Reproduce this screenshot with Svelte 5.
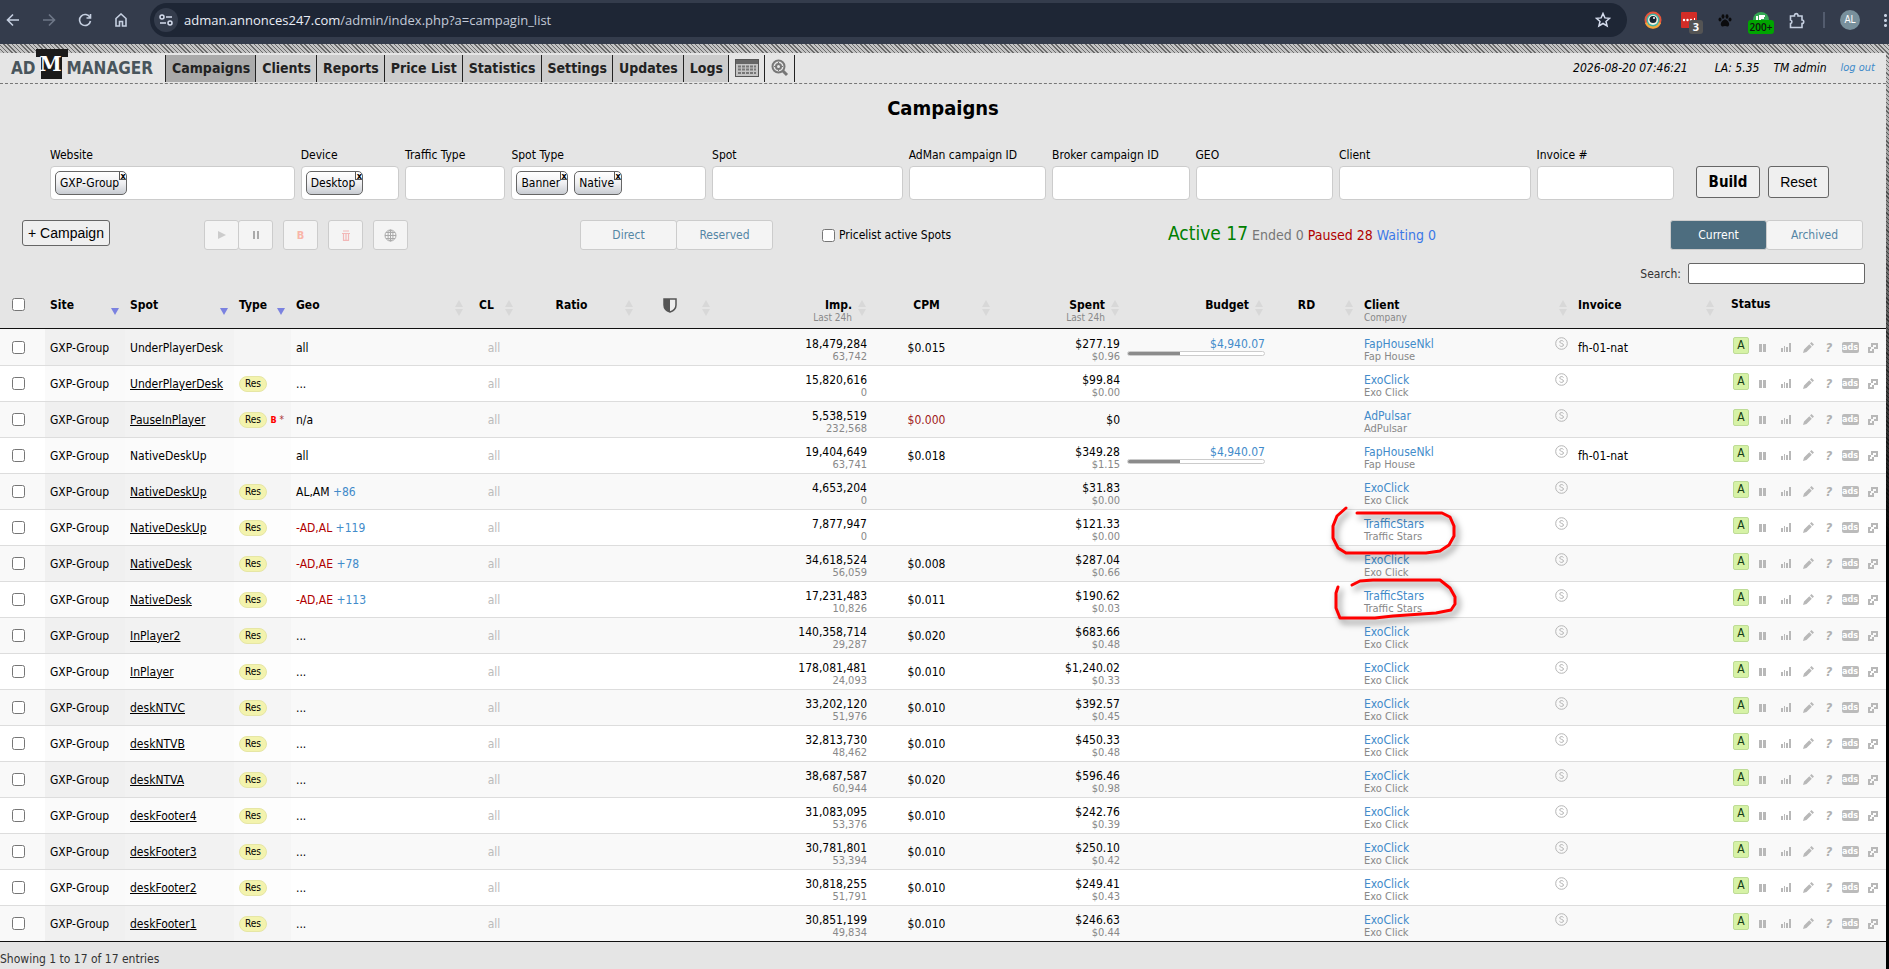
<script lang="ts">
  interface Campaign {
    spot: string;
    res?: boolean;
    blocked?: boolean;
    geo: string;
    geoMore?: string;
    excluded?: boolean;
    imp: string;
    impDay: string;
    cpm: string;
    spent: string;
    spentDay: string;
    budget?: string;
    client: string;
    company: string;
    invoice?: string;
    mark?: string;
  }

  const menu = ['Campaigns', 'Clients', 'Reports', 'Price List', 'Statistics', 'Settings', 'Updates', 'Logs'];

  const filters = [
    { id: 'website', label: 'Website', tags: ['GXP-Group'] },
    { id: 'device', label: 'Device', tags: ['Desktop'] },
    { id: 'traffic', label: 'Traffic Type', tags: [] },
    { id: 'spot-type', label: 'Spot Type', tags: ['Banner', 'Native'] },
    { id: 'spot', label: 'Spot', tags: [] },
    { id: 'adman', label: 'AdMan campaign ID', tags: [] },
    { id: 'broker', label: 'Broker campaign ID', tags: [] },
    { id: 'geo', label: 'GEO', tags: [] },
    { id: 'client', label: 'Client', tags: [] },
    { id: 'invoice', label: 'Invoice #', tags: [] }
  ];

  const columns = [
    { name: 'Site', cls: 'left', sort: 'asc' },
    { name: 'Spot', cls: 'left', sort: 'asc' },
    { name: 'Type', cls: 'left', sort: 'asc' },
    { name: 'Geo', cls: 'left', sort: 'both' },
    { name: 'CL', cls: 'center', sort: 'both' },
    { name: 'Ratio', cls: 'center', sort: 'both' },
    { name: 'shield', cls: 'center', sort: 'both' },
    { name: 'Imp.', sub: 'Last 24h', cls: 'right', sort: 'both' },
    { name: 'CPM', cls: 'center', sort: 'both' },
    { name: 'Spent', sub: 'Last 24h', cls: 'right', sort: 'both' },
    { name: 'Budget', cls: 'right', sort: 'both' },
    { name: 'RD', cls: 'center', sort: 'both' },
    { name: 'Client', sub: 'Company', cls: 'left', sort: 'both' },
    { name: 'Invoice', cls: 'left', sort: 'both' }
  ];

  const widths = [45, 80, 109, 57, 178, 50, 120, 77, 156, 124, 129, 144, 90, 214, 147, 166];

  const exo = { client: 'ExoClick', company: 'Exo Click' };
  const fap = { client: 'FapHouseNkl', company: 'Fap House', invoice: 'fh-01-nat', budget: '$4,940.07' };
  const stars = { client: 'TrafficStars', company: 'Traffic Stars' };

  const upperMark = 'M27 8 L18 16 L14 26 V38 L19 48 L27 53 H107 L121 51 L130 45 L135 36 V26 L131 17 L123 13 H38';
  const lowerMark = 'M19 15 L17 21 V36 L21 46 H56 L74 44 L117 41 L132 38 L136 32 V25 L131 16 L121 8 H54 L41 9 L33 13';

  const campaigns: Campaign[] = [
    { spot: 'UnderPlayerDesk', geo: 'all', imp: '18,479,284', impDay: '63,742', cpm: '$0.015', spent: '$277.19', spentDay: '$0.96', ...fap },
    { spot: 'UnderPlayerDesk', res: true, geo: '...', imp: '15,820,616', impDay: '0', cpm: '', spent: '$99.84', spentDay: '$0.00', ...exo },
    { spot: 'PauseInPlayer', res: true, blocked: true, geo: 'n/a', imp: '5,538,519', impDay: '232,568', cpm: '$0.000', spent: '$0', spentDay: '', client: 'AdPulsar', company: 'AdPulsar' },
    { spot: 'NativeDeskUp', geo: 'all', imp: '19,404,649', impDay: '63,741', cpm: '$0.018', spent: '$349.28', spentDay: '$1.15', ...fap },
    { spot: 'NativeDeskUp', res: true, geo: 'AL,AM', geoMore: '+86', imp: '4,653,204', impDay: '0', cpm: '', spent: '$31.83', spentDay: '$0.00', ...exo },
    { spot: 'NativeDeskUp', res: true, geo: '-AD,AL', geoMore: '+119', excluded: true, imp: '7,877,947', impDay: '0', cpm: '', spent: '$121.33', spentDay: '$0.00', mark: upperMark, ...stars },
    { spot: 'NativeDesk', res: true, geo: '-AD,AE', geoMore: '+78', excluded: true, imp: '34,618,524', impDay: '56,059', cpm: '$0.008', spent: '$287.04', spentDay: '$0.66', ...exo },
    { spot: 'NativeDesk', res: true, geo: '-AD,AE', geoMore: '+113', excluded: true, imp: '17,231,483', impDay: '10,826', cpm: '$0.011', spent: '$190.62', spentDay: '$0.03', mark: lowerMark, ...stars },
    { spot: 'InPlayer2', res: true, geo: '...', imp: '140,358,714', impDay: '29,287', cpm: '$0.020', spent: '$683.66', spentDay: '$0.48', ...exo },
    { spot: 'InPlayer', res: true, geo: '...', imp: '178,081,481', impDay: '24,093', cpm: '$0.010', spent: '$1,240.02', spentDay: '$0.33', ...exo },
    { spot: 'deskNTVC', res: true, geo: '...', imp: '33,202,120', impDay: '51,976', cpm: '$0.010', spent: '$392.57', spentDay: '$0.45', ...exo },
    { spot: 'deskNTVB', res: true, geo: '...', imp: '32,813,730', impDay: '48,462', cpm: '$0.010', spent: '$450.33', spentDay: '$0.48', ...exo },
    { spot: 'deskNTVA', res: true, geo: '...', imp: '38,687,587', impDay: '60,944', cpm: '$0.020', spent: '$596.46', spentDay: '$0.98', ...exo },
    { spot: 'deskFooter4', res: true, geo: '...', imp: '31,083,095', impDay: '53,376', cpm: '$0.010', spent: '$242.76', spentDay: '$0.39', ...exo },
    { spot: 'deskFooter3', res: true, geo: '...', imp: '30,781,801', impDay: '53,394', cpm: '$0.010', spent: '$250.10', spentDay: '$0.42', ...exo },
    { spot: 'deskFooter2', res: true, geo: '...', imp: '30,818,255', impDay: '51,791', cpm: '$0.010', spent: '$249.41', spentDay: '$0.43', ...exo },
    { spot: 'deskFooter1', res: true, geo: '...', imp: '30,851,199', impDay: '49,834', cpm: '$0.010', spent: '$246.63', spentDay: '$0.44', ...exo }
  ];

  let view = $state('current');
  let pricelistOnly = $state(false);
</script>

<div class="browser">
  <button class="nav-btn" aria-label="Back"><svg width="14" height="14" viewBox="0 0 14 14"><path d="M13 7H2M7 1.500L1.500 7L7 12.500" /></svg></button>
  <button class="nav-btn dim" aria-label="Forward"><svg width="14" height="14" viewBox="0 0 14 14"><path d="M1 7H12M7 1.500L12.500 7L7 12.500" /></svg></button>
  <button class="nav-btn" aria-label="Reload"><svg width="14" height="14" viewBox="0 0 14 14"><path d="M12 4.500A5.500 5.500 0 1 0 12.500 8M12.500 1V5H8.500" /></svg></button>
  <button class="nav-btn" aria-label="Home"><svg width="14" height="14" viewBox="0 0 14 14"><path d="M2 5.500L7 1L12 5.500V13H8.500V8.500H5.500V13H2Z" /></svg></button>
  <div class="omnibox">
    <button class="site-info" aria-label="Site information"><svg width="14" height="12" viewBox="0 0 14 12"><circle cx="3" cy="3" r="2" /><path d="M7 3H13M1 9H7" /><circle cx="11" cy="9" r="2" /></svg></button>
    <span class="url">adman.annonces247.com<span>/admin/index.php?a=campagin_list</span></span>
    <svg class="star" width="16" height="16" viewBox="0 0 16 16"><path d="M8 1.500L9.900 5.900L14.600 6.300L11 9.400L12.100 14L8 11.500L3.900 14L5 9.400L1.400 6.300L6.100 5.900Z" /></svg>
  </div>
  <div class="extensions">
    <span class="ext"><svg width="18" height="18" viewBox="0 0 18 18"><circle cx="9" cy="9" r="8.500" fill="#e8553b" /><path d="M1 12A8.500 8.500 0 0 0 17 12L9 9Z" fill="#f4a63a" /><circle cx="9" cy="9" r="6.500" fill="#3fb5a6" /><circle cx="9" cy="9" r="5" fill="#f2efe0" /><circle cx="9" cy="8.500" r="3.500" fill="#142331" /><circle cx="10" cy="7" r="1" fill="#fff" /></svg></span>
    <span class="ext"><svg width="16" height="16" viewBox="0 0 16 16"><rect width="16" height="16" rx="1" fill="#d32d27" /><g fill="#fff"><circle cx="3" cy="8" r="1.200" /><circle cx="6.500" cy="8" r="1.200" /><circle cx="10" cy="8" r="1.200" /><path d="M13 6h1v4h-1z" /></g></svg><b class="count">3</b></span>
    <span class="ext"><svg width="14" height="13" viewBox="0 0 14 13" fill="#0b0b0d"><ellipse cx="2" cy="5.500" rx="1.500" ry="2" /><ellipse cx="5" cy="2.500" rx="1.500" ry="2.200" /><ellipse cx="9" cy="2.500" rx="1.500" ry="2.200" /><ellipse cx="12" cy="5.500" rx="1.500" ry="2" /><path d="M7 5.500C9 5.500 12 9 11 11.300C10 13.500 8.500 12 7 12S4 13.500 3 11.300C2 9 5 5.500 7 5.500Z" /></svg></span>
    <span class="ext"><svg width="16" height="16" viewBox="0 0 16 16"><circle cx="8" cy="8" r="8" fill="#34a853" /><path d="M4 4V8M7 8V4H12M7 6H11" stroke="#fff" stroke-width="2" /></svg><b class="count green">200+</b></span>
    <span class="ext"><svg width="16" height="17" viewBox="0 0 16 17" fill="none" stroke="#c5cfe0" stroke-width="1.600"><path d="M1.500 4H5.500V3A1.800 1.800 0 0 1 9 3V4H13V8A1.700 1.700 0 0 1 13 11.500V15.500H1.500V11.500A1.800 1.800 0 0 0 1.500 8Z" /></svg></span>
    <i class="divider"></i>
    <span class="avatar">AL</span>
    <span class="dots"></span>
  </div>
</div>

<div class="backdrop">
  <div class="page">
    <header class="topbar">
      <a class="logo" href="#home" aria-label="AD M MANAGER"><span>AD</span><i>M</i><span>MANAGER</span></a>
      <nav>
        {#each menu as item, i}
          <a href="#{item}" class:active={i === 0}>{item}</a>
        {/each}
        <a href="#calendar" class="icon" aria-label="Calendar"><svg width="24" height="18" viewBox="0 0 24 18"><rect x="0.500" y="0.500" width="23" height="17" fill="#c4c4c4" stroke="#555" /><path d="M1 1H23V5H1Z" fill="#666" /><path d="M3 7.500H21M3 10.500H21M3 14H21" stroke="#777" stroke-width="2" stroke-dasharray="3 1" /></svg></a>
        <a href="#lookup" class="icon" aria-label="Lookup"><svg width="18" height="18" viewBox="0 0 18 18" fill="none" stroke="#777"><circle cx="7.500" cy="7.500" r="6" stroke-width="2" /><circle cx="7.500" cy="7.500" r="2.500" stroke-width="2" /><path d="M7.500 3V5M7.500 10V12M3 7.500H5M10 7.500H12" /><path d="M12 12L16 16" stroke-width="3" /></svg></a>
      </nav>
      <div class="session">
        <span class="date">2026-08-20 07:46:21</span>
        <span>LA: 5.35</span>
        <span>TM admin</span>
        <a href="#logout">log out</a>
      </div>
    </header>

    <h1>Campaigns</h1>

    <form class="filters">
      <div class="fields">
        {#each filters as f}
          <div class="field">
            <label for={f.id}>{f.label}</label>
            <div class="box">
              {#each f.tags as tag}
                <span class="tag">{tag}<button type="button" aria-label="Remove {tag}">x</button></span>
              {/each}
              <input id={f.id} type="text" />
            </div>
          </div>
        {/each}
      </div>
      <button type="button" class="plain build">Build</button>
      <button type="button" class="plain reset">Reset</button>
    </form>

    <div class="tools">
      <button class="plain add">+ Campaign</button>
      <div class="actions">
        <div class="group">
          <button aria-label="Start"><svg width="10" height="10" viewBox="0 0 10 10"><path d="M1 1L9 5L1 9Z" fill="#ccc" /></svg></button>
          <button aria-label="Pause"><svg width="10" height="10" viewBox="0 0 10 10"><path d="M2 1H4V9H2ZM6 1H8V9H6Z" fill="#aaa" /></svg></button>
        </div>
        <button class="block" aria-label="Block">B</button>
        <button aria-label="Delete"><svg width="10" height="11" viewBox="0 0 10 11" fill="none" stroke="#f2b8b8" stroke-width="1.200"><path d="M2 1H8M1 3.500H9M2.500 4V10.300H7.500V4M5 4V10" /></svg></button>
        <button aria-label="Countries"><svg width="13" height="13" viewBox="0 0 13 13" fill="none" stroke="#aaa"><circle cx="6.500" cy="6.500" r="5.500" /><ellipse cx="6.500" cy="6.500" rx="2.500" ry="5.500" /><path d="M1 6.500H12M6.500 1V12M2 3.500H11M2 9.500H11" /></svg></button>
      </div>
      <div class="group wide">
        <button>Direct</button>
        <button>Reserved</button>
      </div>
      <label class="pricelist"><input type="checkbox" bind:checked={pricelistOnly} />Pricelist active Spots</label>
      <p class="totals"><b>Active 17</b> <span class="ended">Ended 0</span> <span class="paused">Paused 28</span> <span class="waiting">Waiting 0</span></p>
      <div class="group wide">
        <button class:on={view === 'current'} onclick={() => (view = 'current')}>Current</button>
        <button class:on={view === 'archived'} onclick={() => (view = 'archived')}>Archived</button>
      </div>
    </div>

    <label class="search">Search: <input type="text" /></label>

    <table>
      <colgroup>
        {#each widths as w}
          <col style="width: {w}px" />
        {/each}
      </colgroup>
      <thead>
        <tr>
          <th class="check"><input type="checkbox" aria-label="Select all" /></th>
          {#each columns as col}
            <th class={col.cls}>
              <div class="head">
                <span class="title">
                  {#if col.name === 'shield'}
                    <svg width="14" height="15" viewBox="0 0 14 15"><path d="M1 1H13V7C13 11 10 13 7 14C4 13 1 11 1 7Z" fill="#eee" stroke="#555" stroke-width="1.500" /><path d="M1 1H7V14C4 13 1 11 1 7Z" fill="#555" /></svg>
                  {:else}
                    {col.name}
                  {/if}
                  {#if col.sub}<small>{col.sub}</small>{/if}
                </span>
                <svg class="sort" width="10" height="16" viewBox="0 0 10 16">
                  {#if col.sort === 'asc'}
                    <path d="M1 8H9L5 15Z" fill="#7b82e0" />
                  {:else}
                    <path d="M1 7L5 0L9 7ZM1 9H9L5 16Z" fill="#d8d8d8" />
                  {/if}
                </svg>
              </div>
            </th>
          {/each}
          <th class="status-head">Status</th>
        </tr>
      </thead>
      <tbody>
        {#each campaigns as c}
          <tr>
            <td class="check"><input type="checkbox" aria-label="Select {c.spot}" /></td>
            <td class="site">GXP-Group</td>
            <td class="spot">{#if c.res}<a href="#spot">{c.spot}</a>{:else}{c.spot}{/if}</td>
            <td class="type">
              {#if c.res}<span class="res">Res</span>{/if}
              {#if c.blocked}<span class="flag"><b>B</b> *</span>{/if}
            </td>
            <td class:excluded={c.excluded}>{c.geo} {#if c.geoMore}<a class="link" href="#geo">{c.geoMore}</a>{/if}</td>
            <td class="center all">all</td>
            <td></td>
            <td></td>
            <td class="right two">{c.imp}<small>{c.impDay}</small></td>
            <td class="cpm" class:zero={c.cpm === '$0.000'}>{c.cpm}</td>
            <td class="right" class:two={c.spentDay}>{c.spent}{#if c.spentDay}<small>{c.spentDay}</small>{/if}</td>
            <td class="right budget">
              {#if c.budget}
                <a class="link" href="#budget">{c.budget}</a>
                <div class="bar"><div style="width: 38%"></div></div>
              {/if}
            </td>
            <td></td>
            <td class="client two">
              <div class="client-cell">
                <span><a class="link" href="#client">{c.client}</a><small>{c.company}</small></span>
                <svg width="13" height="13" viewBox="0 0 13 13" fill="none" stroke="#b5b5b5"><circle cx="6.500" cy="6.500" r="5.800" /><path d="M8.500 4.500C7.500 3 4.600 3.300 4.700 5C4.900 6.800 8.500 6 8.500 8C8.400 9.800 5.300 9.900 4.500 8.300" /></svg>
              </div>
              {#if c.mark}
                <svg class="mark" width="150" height="66" viewBox="0 0 150 66"><path d={c.mark} /></svg>
              {/if}
            </td>
            <td>{c.invoice ?? ''}</td>
            <td class="status">
              <div class="icons">
                <span class="letter">A</span>
                <button aria-label="Pause"><svg width="7" height="8" viewBox="0 0 7 8"><path d="M0 0H3V8H0ZM4 0H7V8H4Z" /></svg></button>
                <button aria-label="Statistics"><svg width="10" height="9" viewBox="0 0 10 9"><path d="M0 5H2V9H0ZM3 3H4V9H3ZM5 4H7V9H5ZM8 0H10V9H8Z" /></svg></button>
                <button aria-label="Edit"><svg width="11" height="11" viewBox="0 0 11 11"><path d="M8.500 0L11 2.500L9.500 4L7 1.500ZM6.300 2.200L8.800 4.700L3.500 10L0 11L1 7.500Z" /></svg></button>
                <button class="help">?</button>
                <button class="ads">ads</button>
                <button aria-label="Copy"><svg width="10" height="10" viewBox="0 0 10 10"><path d="M3 0H10V6H3ZM5 2V4H8V2ZM0 4H6V10H0ZM2 6V8H4V6Z" fill-rule="evenodd" /></svg></button>
              </div>
            </td>
          </tr>
        {/each}
      </tbody>
    </table>
    <p class="showing">Showing 1 to 17 of 17 entries</p>
  </div>
</div>

<style>
  :global(body) {
    background: #000;
    color: #000;
    font-family: "DejaVu Sans Condensed", "DejaVu Sans", sans-serif;
    font-size: 12px;
    line-height: 14px;
  }

  button {
    font-family: inherit;
    padding: 0;
    cursor: pointer;
  }

  input {
    box-sizing: border-box;
  }

  input[type='checkbox'] {
    width: 13px;
    height: 13px;
    margin: 0;
  }

  /* browser bar */
  .browser {
    display: flex;
    align-items: center;
    box-sizing: border-box;
    height: 44px;
    padding: 0 0 4px 6px;
    background: #343c4c;
    overflow: hidden;
  }

  .nav-btn {
    width: 14px;
    height: 14px;
    margin-right: 22px;
    border: 0;
    background: none;
    line-height: 0;
  }

  .nav-btn svg {
    fill: none;
    stroke: #c5cfe0;
    stroke-width: 1.6;
  }

  .nav-btn.dim {
    opacity: 0.4;
  }

  .omnibox {
    display: flex;
    flex: 1;
    align-items: center;
    box-sizing: border-box;
    height: 34px;
    padding: 0 16px 0 4px;
    border-radius: 17px;
    background: #1e2635;
  }

  .site-info {
    width: 24px;
    height: 24px;
    border: 0;
    border-radius: 50%;
    background: #343c4c;
    line-height: 0;
  }

  .site-info svg,
  .star {
    fill: none;
    stroke: #d5dced;
    stroke-width: 1.5;
  }

  .url {
    flex: 1;
    margin-left: 6px;
    color: #e9edf6;
    font-family: "Open Sans", sans-serif;
    font-size: 13px;
    line-height: 20px;
  }

  .url span {
    color: #c3cad8;
  }

  .extensions {
    display: flex;
    flex: none;
    align-items: center;
    width: 262px;
    padding-left: 8px;
    box-sizing: border-box;
  }

  .ext {
    display: flex;
    position: relative;
    align-items: center;
    justify-content: center;
    width: 36px;
    height: 24px;
  }

  .count {
    position: absolute;
    top: 12px;
    left: 18px;
    width: 14px;
    border-radius: 3px;
    background: #545454;
    color: #fff;
    font-family: "Open Sans", sans-serif;
    font-size: 11px;
    line-height: 14px;
    text-align: center;
  }

  .count.green {
    left: 5px;
    width: 26px;
    background: #00a500;
    color: #111;
    font-size: 10px;
    font-weight: 600;
  }

  .divider {
    width: 2px;
    height: 16px;
    margin: 0 15px 0 8px;
    background: #535c6e;
  }

  .avatar {
    flex: none;
    width: 20px;
    height: 20px;
    border-radius: 50%;
    background: #78909c;
    color: #fff;
    font-size: 10px;
    line-height: 20px;
    text-align: center;
  }

  .dots {
    width: 3px;
    height: 14px;
    margin-left: 24px;
    background: radial-gradient(circle, #c5cfe0 1px, transparent 2px) 0 0 / 3px 5px;
  }

  /* page */
  .backdrop {
    min-height: calc(100vh - 44px);
    box-sizing: border-box;
    padding: 9px 3px 0 0;
    background:
      linear-gradient(to bottom, transparent 20px, #000 500px),
      repeating-linear-gradient(45deg, #c4c4c4 0 2px, #6b6b6b 2px 3px);
  }

  .page {
    min-height: calc(100vh - 53px);
    background: #e5e5e5;
  }

  .topbar {
    display: flex;
    align-items: center;
    box-sizing: border-box;
    height: 31px;
    border-bottom: 1px dashed #777;
  }

  .logo {
    display: flex;
    align-items: center;
    box-sizing: border-box;
    width: 165px;
    padding-left: 11px;
    color: #49555c;
    font-size: 17px;
    font-weight: bold;
    text-decoration: none;
  }

  .logo i {
    position: relative;
    width: 21px;
    height: 30px;
    margin: -9px 5px 0;
    background: linear-gradient(#1b1b1b, #1b1b1b) 0 100% / 100% 30px;
    color: #fff;
    font-family: "DejaVu Serif", serif;
    font-size: 20px;
    font-style: normal;
    line-height: 31px;
    text-align: center;
    text-indent: -1px;
  }

  /* crossbar above the M */
  .logo i::before {
    content: '';
    position: absolute;
    top: 0;
    left: -5px;
    width: 32px;
    height: 8px;
    background: linear-gradient(#1b1b1b, #1b1b1b) 0 0 / 100% 100%;
    z-index: -1;
  }

  .logo i {
    z-index: 0;
  }

  nav {
    display: flex;
    border-left: 1px solid #222;
  }

  nav a {
    padding: 0 5px 0 6px;
    border-right: 1px solid #222;
    background: #ccc;
    color: #222;
    font-size: 14px;
    font-weight: bold;
    line-height: 27px;
    text-decoration: none;
    white-space: nowrap;
  }

  nav a.active {
    background: #aaa;
  }

  nav a.icon {
    display: flex;
    align-items: center;
    background: none;
  }

  .session {
    display: flex;
    gap: 14px;
    margin-left: auto;
    padding-right: 11px;
    font-style: italic;
  }

  .session .date {
    margin-right: 13px;
  }

  .session a {
    color: #428bca;
    font-size: 11px;
    text-decoration: none;
  }

  h1 {
    margin: 12px 0 28px;
    font-size: 20px;
    line-height: 24px;
    text-align: center;
  }

  .filters {
    display: flex;
    align-items: flex-end;
    padding: 0 57px 0 50px;
  }

  .fields {
    display: grid;
    flex: 1;
    grid-template-columns: 244fr 98fr 100fr 194fr 190fr 137fr 137fr 137fr 191fr 137fr;
    gap: 6px;
    margin-right: 22px;
  }

  .field {
    min-width: 0;
  }

  .field label {
    display: block;
    margin-bottom: 3px;
    line-height: 15px;
    white-space: nowrap;
  }

  .box {
    display: flex;
    align-items: center;
    gap: 6px;
    box-sizing: border-box;
    height: 34px;
    padding: 0 4px;
    border: 1px solid #ccc;
    border-radius: 4px;
    background: #fff;
  }

  .box input {
    flex: 1;
    min-width: 0;
    width: 0;
    border: 0;
    outline: 0;
    background: none;
  }

  .tag {
    display: flex;
    box-sizing: border-box;
    height: 24px;
    padding-left: 4px;
    border: 1px solid #666;
    border-radius: 5px;
    background: linear-gradient(#fff, #f0f0f2 50%, #c8ccd2);
    line-height: 23px;
  }

  .tag button {
    width: 7px;
    height: 8px;
    border: solid #555;
    border-width: 0 0 1px 1px;
    background: none;
    font-size: 9px;
    font-weight: bold;
    line-height: 6px;
  }

  .plain {
    box-sizing: border-box;
    border: 1px solid #666;
    border-radius: 3px;
    background: #efefef;
    color: #000;
    font-family: "Liberation Sans", sans-serif;
    font-size: 14px;
  }

  .build {
    width: 64px;
    height: 32px;
    margin: 0 8px 2px 0;
    font-family: inherit;
    font-size: 15px;
    font-weight: bold;
  }

  .reset {
    width: 61px;
    height: 32px;
    margin-bottom: 2px;
  }

  .tools {
    display: flex;
    align-items: flex-start;
    padding: 20px 23px 0 22px;
  }

  .add {
    width: 88px;
    height: 26px;
    margin-right: 94px;
  }

  .actions {
    display: flex;
    gap: 10px;
    margin-right: 172px;
  }

  .group {
    display: flex;
  }

  .actions button,
  .group button {
    display: flex;
    align-items: center;
    justify-content: center;
    box-sizing: border-box;
    width: 35px;
    height: 30px;
    border: 1px solid #ccc;
    border-radius: 3px;
    background: #f4f4f4;
    color: #5486a5;
    font-size: 12px;
  }

  .actions .block {
    color: #f9b5a8;
    font-size: 11px;
    font-weight: bold;
  }

  .group.wide button {
    width: 97px;
  }

  .group button + button {
    margin-left: -1px;
  }

  .group button.on {
    background: #4d6d7f;
    color: #fff;
  }

  .pricelist {
    display: flex;
    align-items: center;
    gap: 4px;
    height: 30px;
    margin-left: 49px;
  }

  .totals {
    width: 502px;
    margin: 0 0 0 auto;
    font-size: 14px;
    line-height: 26px;
    white-space: nowrap;
  }

  .totals b {
    color: #008000;
    font-size: 19px;
    font-weight: normal;
  }

  .ended {
    color: #777;
  }

  .paused {
    color: #b00000;
  }

  .waiting {
    color: #3b78e7;
  }

  .search {
    display: flex;
    align-items: center;
    justify-content: flex-end;
    gap: 7px;
    height: 21px;
    margin-top: 13px;
    padding-right: 21px;
    color: #333;
  }

  .search input {
    width: 177px;
    height: 21px;
    border: 1px solid #666;
    border-radius: 2px;
    background: #fff;
  }

  table {
    width: 100%;
    table-layout: fixed;
    border-collapse: separate;
    border-spacing: 0;
    border-bottom: 1px solid #111;
    background: #fff;
  }

  th {
    box-sizing: border-box;
    height: 45px;
    padding: 0 5px;
    border-bottom: 1px solid #111;
    background: #e5e5e5;
    font-size: 12px;
    text-align: left;
    vertical-align: top;
  }

  th.check {
    padding-top: 14px;
  }

  .head {
    display: flex;
    padding-top: 14px;
  }

  .title {
    flex: 1;
    line-height: 15px;
  }

  th small {
    font-size: 10px;
    font-weight: normal;
    line-height: 9px;
  }

  .sort {
    flex: none;
    margin: 2px 0 0 5px;
  }

  .status-head {
    padding: 13px 0 0 11px;
  }

  td {
    box-sizing: border-box;
    height: 36px;
    padding: 0 5px;
    border-top: 1px solid #ddd;
    vertical-align: middle;
    white-space: nowrap;
  }

  tr:first-child td {
    border-top-color: transparent;
  }

  tbody tr:nth-child(odd) td {
    background: #f9f9f9;
  }

  td.site {
    background: #fafafa;
  }

  td.spot {
    background: #fbfbfb;
  }

  td.type {
    background: #fdfdfd;
  }

  tbody tr:nth-child(odd) td.site {
    background: #f0f0f0;
  }

  tbody tr:nth-child(odd) td.spot {
    background: #f2f2f2;
  }

  tbody tr:nth-child(odd) td.type {
    background: #f5f5f5;
  }

  .check {
    padding-left: 12px;
    line-height: 0;
  }

  .left {
    text-align: left;
  }

  .center {
    text-align: center;
  }

  .right {
    text-align: right;
  }

  .two {
    padding-top: 4px;
  }

  small {
    display: block;
    color: #888;
    font-size: 11px;
    line-height: 11px;
  }

  .spot a {
    color: #000;
  }

  .res {
    display: inline-block;
    padding: 0 5px;
    border: 1px solid #e6e6a5;
    border-radius: 8px;
    background: #f3f3ad;
    font-size: 10px;
  }

  .flag {
    color: #a33;
    font-size: 10px;
  }

  .flag b {
    color: #f00;
    font-size: 9px;
  }

  .link {
    color: #428bca;
    text-decoration: none;
  }

  .excluded {
    color: #b00000;
  }

  .all {
    color: #bbb;
  }

  .cpm {
    padding-right: 20px;
    text-align: center;
  }

  .zero {
    color: #a01818;
  }

  .budget {
    padding: 2px 4px 0 2px;
  }

  .bar {
    box-sizing: border-box;
    height: 5px;
    margin-bottom: 4px;
    border: 1px solid #ccc;
    border-radius: 3px;
    background: #fff;
    overflow: hidden;
  }

  .bar div {
    height: 3px;
    background: #8b8b8b;
  }

  .client {
    position: relative;
  }

  .client-cell {
    display: flex;
    justify-content: space-between;
  }

  .mark {
    position: absolute;
    top: -10px;
    left: -40px;
    z-index: 1;
    overflow: visible;
    pointer-events: none;
    filter: drop-shadow(3px 4px 3px rgba(0, 0, 0, 0.5));
  }

  .mark path {
    fill: none;
    stroke: #f00;
    stroke-width: 3;
    stroke-linecap: round;
    stroke-linejoin: round;
  }

  .status {
    padding: 0 0 0 13px;
  }

  .icons {
    display: grid;
    grid-template-columns: 16px 26px 22px 22px 20px 22px 24px;
    align-items: center;
    justify-items: center;
  }

  .letter {
    box-sizing: border-box;
    width: 16px;
    height: 17px;
    margin-bottom: 4px;
    border: 1px solid #bedc96;
    border-radius: 2px;
    background: #d6f2a6;
    color: #143c14;
    line-height: 15px;
    text-align: center;
  }

  .icons button {
    border: 0;
    background: none;
    line-height: 0;
  }

  .icons svg {
    fill: #b8b8b8;
  }

  .icons .help {
    color: #b0b0b0;
    font-size: 13px;
    font-style: italic;
    font-weight: bold;
    line-height: 13px;
  }

  .icons .ads {
    width: 17px;
    height: 11px;
    border-radius: 2px;
    background: #bbb;
    color: #fff;
    font-size: 9px;
    font-weight: bold;
    line-height: 9px;
  }

  .showing {
    margin: 10px 0 0;
    color: #333;
    font-size: 12px;
  }
</style>
